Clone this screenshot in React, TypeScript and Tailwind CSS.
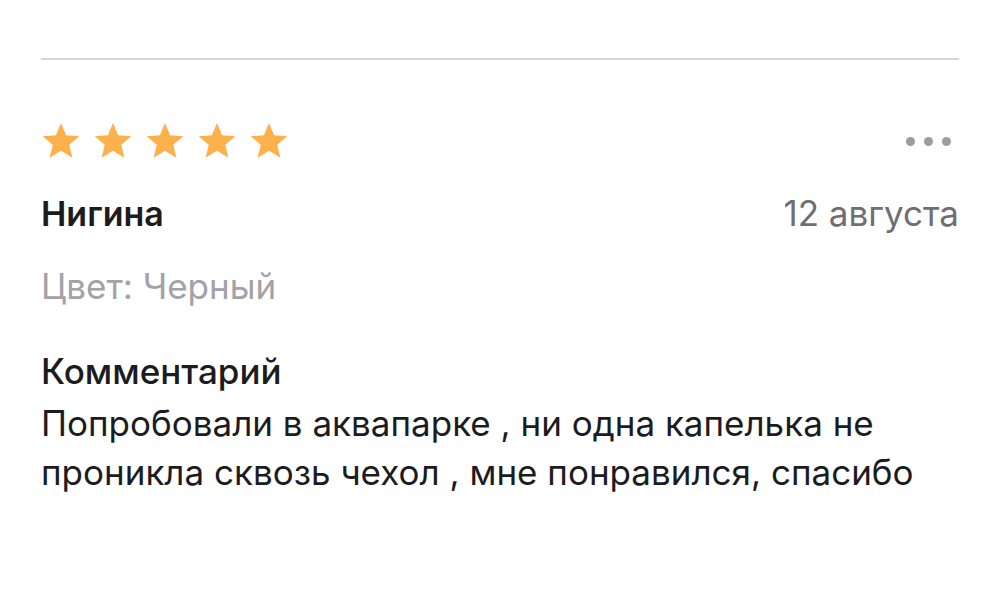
import React from "react";

const Star = () => (
  <svg width="40" height="38" viewBox="0 0 24 23" className="block">
    <path
      d="M12 0.6l3.1 7.4 8 .62-6.1 5.2 1.9 7.8L12 17.4l-6.9 4.22 1.9-7.8L.9 8.62l8-.62z"
      fill="#fdb14a"
    />
  </svg>
);

export default function App() {
  return (
    <div
      className="w-[1000px] h-[601px] bg-white px-[41px] overflow-hidden"
      style={{ fontFamily: "Inter, 'Noto Sans', sans-serif" }}
    >
      <div className="h-[58px]" />
      <div className="h-[2px] bg-[#d6d6da]" />
      <div className="flex items-center justify-between mt-[61px] h-[40px]">
        <div className="flex gap-[12px]">
          <Star />
          <Star />
          <Star />
          <Star />
          <Star />
        </div>
        <div className="flex gap-[9px] pr-[8px]">
          <span className="w-[9px] h-[9px] rounded-full bg-[#9c9ca1]" />
          <span className="w-[9px] h-[9px] rounded-full bg-[#9c9ca1]" />
          <span className="w-[9px] h-[9px] rounded-full bg-[#9c9ca1]" />
        </div>
      </div>
      <div className="flex items-baseline justify-between mt-[32px] h-[40px]">
        <span className="text-[34px] font-semibold text-[#1c1c1e] leading-[40px]">Нигина</span>
        <span className="text-[35px] text-[#6e6e73] leading-[40px]">12 августа</span>
      </div>
      <div className="mt-[33px] text-[35px] text-[#a2a2a7] leading-[40px]">Цвет: Черный</div>
      <div className="mt-[41px] text-[35px] font-medium text-[#1c1c1e] leading-[48px]">Комментарий</div>
      <div className="mt-[4px] text-[35px] text-[#1c1c1e] leading-[49px] whitespace-nowrap">
        Попробовали в аквапарке , ни одна капелька не
        <br />
        проникла сквозь чехол , мне понравился, спасибо
      </div>
    </div>
  );
}
